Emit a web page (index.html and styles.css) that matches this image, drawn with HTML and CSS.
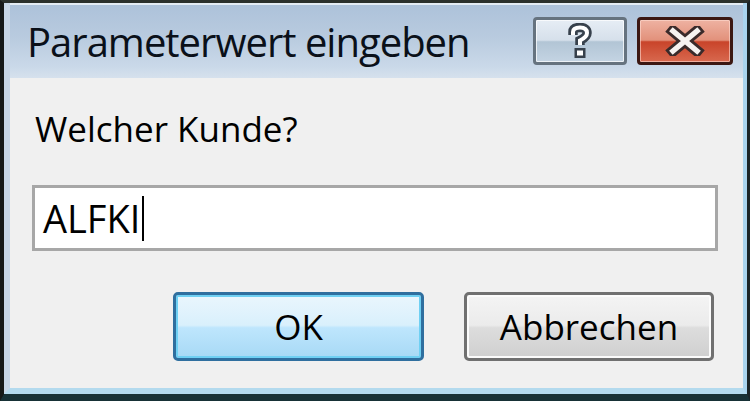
FILE: index.html
```html
<!DOCTYPE html>
<html lang="de">
<head>
<meta charset="utf-8">
<title>Parameterwert eingeben</title>
<link rel="stylesheet" href="styles.css">
</head>
<body>
<div class="window">
  <div class="frame">
    <div class="titlebar">
      <span class="title">Parameterwert eingeben</span>
      <div class="caption-buttons">
        <div class="cap help">
          <svg width="26" height="36" viewBox="0 0 26 36">
            <path d="M6 12 V9 Q6 4.5 13 4.5 Q20 4.5 20 10 Q20 14 13 17.5 V22" fill="none" stroke="#37414c" stroke-width="9.5" stroke-linejoin="miter"/>
            <rect x="7.5" y="25" width="11" height="10" fill="#37414c"/>
            <path d="M6 12 V9 Q6 4.5 13 4.5 Q20 4.5 20 10 Q20 14 13 17.5 V22" fill="none" stroke="#ffffff" stroke-width="4" stroke-linejoin="miter"/>
            <rect x="10" y="27.5" width="6" height="5" fill="#ffffff"/>
          </svg>
        </div>
        <div class="cap close">
          <svg width="42" height="30" viewBox="0 0 42 30">
            <path d="M9 5 L33 25 M33 5 L9 25" stroke="#3a2a2a" stroke-width="11" stroke-linecap="square"/>
            <path d="M9 5 L33 25 M33 5 L9 25" stroke="#f6f2f0" stroke-width="5.5" stroke-linecap="square"/>
          </svg>
        </div>
      </div>
    </div>
    <div class="content">
      <div class="prompt">Welcher Kunde?</div>
      <div class="textbox"><span class="value">ALFKI</span><span class="caret"></span></div>
      <div class="buttons">
        <div class="btn btn-default">OK</div>
        <div class="btn">Abbrechen</div>
      </div>
    </div>
  </div>
</div>
</body>
</html>
```
FILE: styles.css
```css
html, body {
  margin: 0;
  padding: 0;
  background: #1c2321;
}

.window {
  width: 750px;
  height: 401px;
  box-sizing: border-box;
  border-top: 3px solid #2b312c;
  border-left: 4px solid #171a18;
  border-right: 3px solid #1a2427;
  border-bottom: 7px solid #173136;
  font-family: "Open Sans", "DejaVu Sans", sans-serif;
  color: #000;
}

.frame {
  height: 100%;
  box-sizing: border-box;
  display: flex;
  flex-direction: column;
  border-left: 6px solid #c8d7e6;
  border-right: 4px solid #a9d4ee;
  border-bottom: 6px solid #b3daee;
  background: #f0f0f0;
}

.titlebar {
  height: 75px;
  box-sizing: border-box;
  display: flex;
  justify-content: space-between;
  align-items: flex-start;
  padding: 0 10px 0 17px;
  border-top: 2px solid #e4ecf4;
  background: linear-gradient(to bottom, #adc2da 0%, #b9cbdf 45%, #cad9e9 85%, #d6e1ed 100%);
}

.title {
  margin-top: 17px;
  font-size: 40px;
  line-height: 1;
  letter-spacing: -1px;
  color: #0a1019;
}

.caption-buttons {
  display: flex;
  gap: 10px;
  margin-top: 12px;
}

.cap {
  height: 48px;
  box-sizing: border-box;
  border-radius: 4px;
  display: flex;
  align-items: center;
  justify-content: center;
}

.help {
  width: 94px;
  border: 3px solid #66737f;
  background: linear-gradient(to bottom, #e6edf5 0%, #d6e0eb 48%, #b2c5d5 52%, #c4d4e3 100%);
  box-shadow: inset 0 0 0 1px rgba(255,255,255,0.7);
}

.close {
  width: 96px;
  border: 3px solid #3b1712;
  background: linear-gradient(to bottom, #eeb2a2 0%, #e2917b 48%, #c9442a 52%, #d8694f 100%);
  box-shadow: inset 0 0 0 1px rgba(255,220,210,0.6);
}

.content {
  flex: 1;
  display: flex;
  flex-direction: column;
  padding: 33px 25px 0 22px;
}

.prompt {
  font-size: 35px;
  line-height: 1;
  padding-left: 3px;
}

.textbox {
  margin-top: 39px;
  height: 66px;
  box-sizing: border-box;
  border: 3px solid #a7a7a7;
  background: #ffffff;
  display: flex;
  align-items: center;
  padding-left: 8px;
}

.value {
  font-size: 38px;
  line-height: 1;
}

.caret {
  width: 2px;
  height: 45px;
  background: #000;
  margin-left: 2px;
}

.buttons {
  display: flex;
  justify-content: flex-end;
  gap: 40px;
  margin-top: 41px;
  padding-right: 4px;
}

.btn {
  width: 250px;
  height: 69px;
  box-sizing: border-box;
  border: 3px solid #707070;
  border-radius: 5px;
  display: flex;
  align-items: center;
  justify-content: center;
  font-size: 35px;
  line-height: 1;
  background: linear-gradient(to bottom, #f4f4f4 0%, #ebebeb 48%, #dddddd 52%, #cfcfcf 100%);
  box-shadow: inset 0 0 0 2px #fbfbfb;
}

.btn-default {
  width: 251px;
  border-color: #2f6f9f;
  background: linear-gradient(to bottom, #eaf6fd 0%, #d9f0fc 48%, #bee6fd 52%, #a7d9f5 100%);
  box-shadow: inset 0 0 0 2px #6fd0f3;
}
```
